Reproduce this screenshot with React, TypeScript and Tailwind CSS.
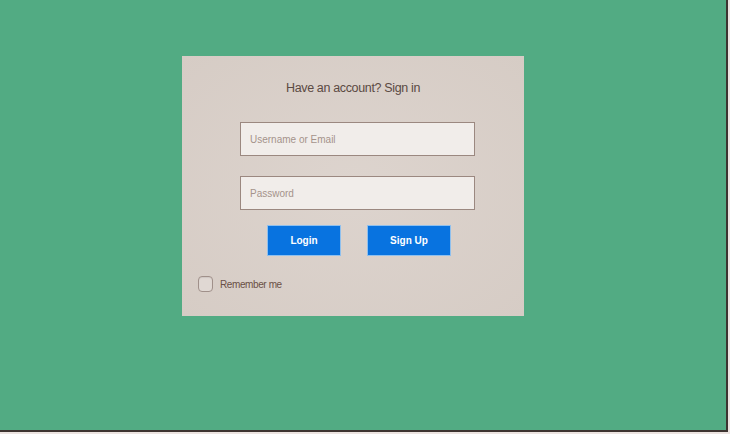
export default function App() {
  return (
    <div className="w-[730px] h-[434px] bg-[#ece4e1] font-['Liberation_Sans',_'DejaVu_Sans',_sans-serif]">
      <div className="w-[728px] h-[432px] bg-[#52ab83] border-r-2 border-b-2 border-[#3d3431] pt-[56px] pl-[182px]">
        <div className="w-[342px] h-[260px] bg-[radial-gradient(ellipse_at_center,_#ddd4ce_0%,_#d6ccc5_100%)] flex flex-col">
          <h1 className="mt-[24px] text-center text-[12.5px] leading-[16px] tracking-[-0.35px] text-[#5b4a43]">
            Have an account? Sign in
          </h1>
          <input
            type="text"
            placeholder="Username or Email"
            className="mt-[26px] ml-[58px] w-[235px] h-[34px] border border-[#9b8880] bg-[#f1edea] px-[9px] text-[10px] text-[#5b4a43] placeholder:text-[#a5938b] outline-none"
          />
          <input
            type="password"
            placeholder="Password"
            className="mt-[20px] ml-[58px] w-[235px] h-[34px] border border-[#9b8880] bg-[#f1edea] px-[9px] text-[10px] text-[#5b4a43] placeholder:text-[#a5938b] outline-none"
          />
          <div className="mt-[15px] ml-[85px] flex gap-[26px]">
            <button className="w-[74px] h-[31px] bg-[#0873e0] border border-[#8fc0ee] text-white text-[10px] font-bold">
              Login
            </button>
            <button className="w-[84px] h-[31px] bg-[#0873e0] border border-[#8fc0ee] text-white text-[10px] font-bold">
              Sign Up
            </button>
          </div>
          <label className="mt-[20px] ml-[16px] flex items-center gap-[7px]">
            <span className="w-[15px] h-[16px] rounded-[4px] border border-[#a0908a] bg-[#e0d8d3] shadow-[inset_0_1px_1px_rgba(0,0,0,0.08)]" />
            <span className="text-[10px] tracking-[-0.4px] text-[#6a4f46]">Remember me</span>
          </label>
        </div>
      </div>
    </div>
  );
}
